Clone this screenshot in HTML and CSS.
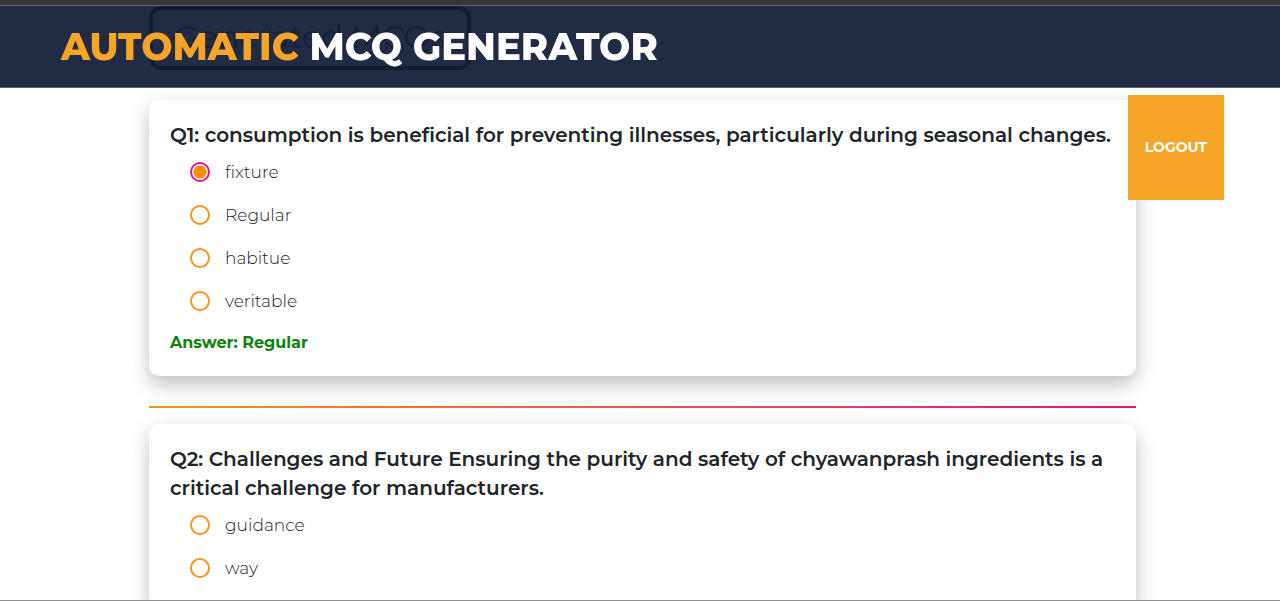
FILE: index.html
```html
<!DOCTYPE html>
<html lang="en">
<head>
<meta charset="utf-8">
<meta name="viewport" content="width=device-width, initial-scale=1">
<title>Automatic MCQ Generator</title>
<link rel="stylesheet" href="styles.css">
</head>
<body>
<header class="navbar">
  <div class="brand"><span class="brand-accent">AUTOMATIC</span> MCQ GENERATOR</div>
</header>
<button class="logout" type="button">LOGOUT</button>
<main class="content">
  <h1 class="page-title">Generated MCQs</h1>
  <section class="card">
    <h2 class="question" id="q1">Q1: consumption is beneficial for preventing illnesses, particularly during seasonal changes.</h2>
    <div class="options" role="radiogroup" aria-labelledby="q1">
      <label class="option"><input class="radio" type="radio" name="q1" checked>fixture</label>
      <label class="option"><input class="radio" type="radio" name="q1">Regular</label>
      <label class="option"><input class="radio" type="radio" name="q1">habitue</label>
      <label class="option"><input class="radio" type="radio" name="q1">veritable</label>
    </div>
    <p class="answer">Answer: Regular</p>
  </section>
  <hr class="divider">
  <section class="card">
    <h2 class="question" id="q2">Q2: Challenges and Future Ensuring the purity and safety of chyawanprash ingredients is a critical challenge for manufacturers.</h2>
    <div class="options" role="radiogroup" aria-labelledby="q2">
      <label class="option"><input class="radio" type="radio" name="q2">guidance</label>
      <label class="option"><input class="radio" type="radio" name="q2">way</label>
    </div>
  </section>
</main>
</body>
</html>
```
FILE: styles.css
```css
* {
  box-sizing: border-box;
}

body {
  margin: 0;
  height: 100vh;
  overflow: hidden;
  border-bottom: 1px solid #929292;
  background: #fff;
  color: #212529;
  font-family: Montserrat, Inter, "Open Sans", sans-serif;
}

.navbar {
  position: fixed;
  top: 0;
  left: 0;
  right: 0;
  z-index: 2;
  padding: 18px 61px 16px;
  border-top: 5px solid #363636;
  border-bottom: 1px solid #5c6473;
  background: rgba(20, 30, 56, 0.94);
  background-clip: padding-box;
  box-shadow: inset 0 1px 0 #5b675f;
}

.brand {
  color: #fff;
  font-size: 37px;
  font-weight: 800;
  line-height: 48px;
}

.brand-accent {
  color: #f6a528;
}

.logout {
  position: fixed;
  top: 95px;
  right: 56px;
  z-index: 1;
  padding: 44px 17px;
  border: 0;
  background: #f6a528;
  color: #fff;
  font-family: inherit;
  font-size: 14px;
  font-weight: 700;
  line-height: 17px;
}

.content {
  padding: 6px 144px 0 149px;
}

.page-title {
  width: fit-content;
  margin: 0 0 30px;
  padding: 7px 21px 9px;
  border: 4px solid #000;
  border-radius: 12px;
  font-size: 32px;
  font-weight: 400;
  line-height: 40px;
}

.card {
  padding: 21px;
  border-radius: 10px;
  background: #fff;
  box-shadow: 0 8px 20px rgba(0, 0, 0, 0.25);
}

.question {
  margin: 0;
  font-size: 20px;
  font-weight: 600;
  line-height: 29px;
}

.options {
  display: flex;
  flex-direction: column;
  padding-left: 20px;
}

.option {
  display: flex;
  align-items: center;
  gap: 15px;
  height: 43px;
  color: #212529;
  font-size: 17px;
  font-weight: 300;
}

.radio {
  appearance: none;
  width: 20px;
  height: 20px;
  margin: 0;
  border: 2px solid #f7931e;
  border-radius: 50%;
  background: #fff;
}

.radio:checked {
  border-color: #e3128b;
  background: radial-gradient(circle, #ff8c00 6px, #fff 7px);
}

.answer {
  margin: 9px 0 0;
  color: #0b830b;
  font-size: 16px;
  font-weight: 700;
  line-height: 24px;
}

.divider {
  height: 2px;
  margin: 30px 0 16px;
  border: 0;
  background: linear-gradient(90deg, #f7931e, #e5137d);
}
```
